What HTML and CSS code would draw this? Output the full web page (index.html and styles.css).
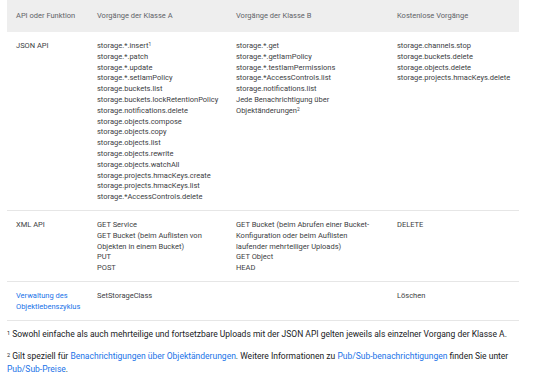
FILE: index.html
```html
<!DOCTYPE html>
<html lang="de">
<head>
<meta charset="utf-8">
<link rel="stylesheet" href="styles.css">
</head>
<body>
<div class="page">
  <table class="ops">
    <colgroup>
      <col class="c1"><col class="c2"><col class="c3"><col class="c4">
    </colgroup>
    <thead>
      <tr>
        <th>API oder Funktion</th>
        <th>Vorgänge der Klasse A</th>
        <th>Vorgänge der Klasse B</th>
        <th>Kostenlose Vorgänge</th>
      </tr>
    </thead>
    <tbody>
      <tr>
        <td>JSON API</td>
        <td>storage.*.insert<sup>1</sup><br>storage.*.patch<br>storage.*.update<br>storage.*.setIamPolicy<br>storage.buckets.list<br>storage.buckets.lockRetentionPolicy<br>storage.notifications.delete<br>storage.objects.compose<br>storage.objects.copy<br>storage.objects.list<br>storage.objects.rewrite<br>storage.objects.watchAll<br>storage.projects.hmacKeys.create<br>storage.projects.hmacKeys.list<br>storage.*AccessControls.delete</td>
        <td>storage.*.get<br>storage.*.getIamPolicy<br>storage.*.testIamPermissions<br>storage.*AccessControls.list<br>storage.notifications.list<br>Jede Benachrichtigung über Objektänderungen<sup>2</sup></td>
        <td>storage.channels.stop<br>storage.buckets.delete<br>storage.objects.delete<br>storage.projects.hmacKeys.delete</td>
      </tr>
      <tr>
        <td>XML API</td>
        <td>GET Service<br>GET Bucket (beim Auflisten von Objekten in einem Bucket)<br>PUT<br>POST</td>
        <td>GET Bucket (beim Abrufen einer Bucket-Konfiguration oder beim Auflisten laufender mehrteiliger Uploads)<br>GET Object<br>HEAD</td>
        <td>DELETE</td>
      </tr>
      <tr>
        <td><a class="link" href="#">Verwaltung des Objektlebenszyklus</a></td>
        <td>SetStorageClass</td>
        <td></td>
        <td>Löschen</td>
      </tr>
    </tbody>
  </table>
  <p class="note note-1"><sup>1</sup> Sowohl einfache als auch mehrteilige und fortsetzbare Uploads mit der JSON API gelten jeweils als einzelner Vorgang der Klasse A.</p>
  <p class="note note-2"><sup>2</sup> Gilt speziell für <a class="link" href="#">Benachrichtigungen über Objektänderungen</a>. Weitere Informationen zu <a class="link" href="#">Pub/Sub-benachrichtigungen</a> finden Sie unter <a class="link" href="#">Pub/Sub-Preise</a>.</p>
</div>
</body>
</html>
```

FILE: styles.css
```css
html, body {
  margin: 0;
  padding: 0;
  background: #ffffff;
}

body {
  font-family: Roboto, "Noto Sans", "Liberation Sans", sans-serif;
  color: #3c4043;
}

.page {
  width: 512px;
  margin-left: 7px;
}

.ops {
  width: 512px;
  border-collapse: collapse;
  table-layout: fixed;
  font-size: 7.5px;
  line-height: 10.8px;
}

.c1 { width: 81px; }
.c2 { width: 139px; }
.c3 { width: 161px; }
.c4 { width: 131px; }

.ops th {
  background: #eeeeee;
  color: #5f6368;
  font-weight: 400;
  text-align: left;
  height: 32px;
  padding: 0 9px;
  box-sizing: border-box;
  vertical-align: middle;
}

.ops td {
  vertical-align: top;
  padding: 9px 9px 7px;
  border-bottom: 1px solid #e6e6e6;
  color: #3c4043;
}

.ops sup,
.note sup {
  font-size: 65%;
  line-height: 0;
  vertical-align: 0.4em;
}

.link {
  color: #1a73e8;
  text-decoration: none;
}

.note {
  margin: 0;
  font-size: 8.5px;
  line-height: 12.8px;
  color: #202124;
}

.note-1 {
  margin-top: 7px;
}

.note-2 {
  margin-top: 10px;
}
```
